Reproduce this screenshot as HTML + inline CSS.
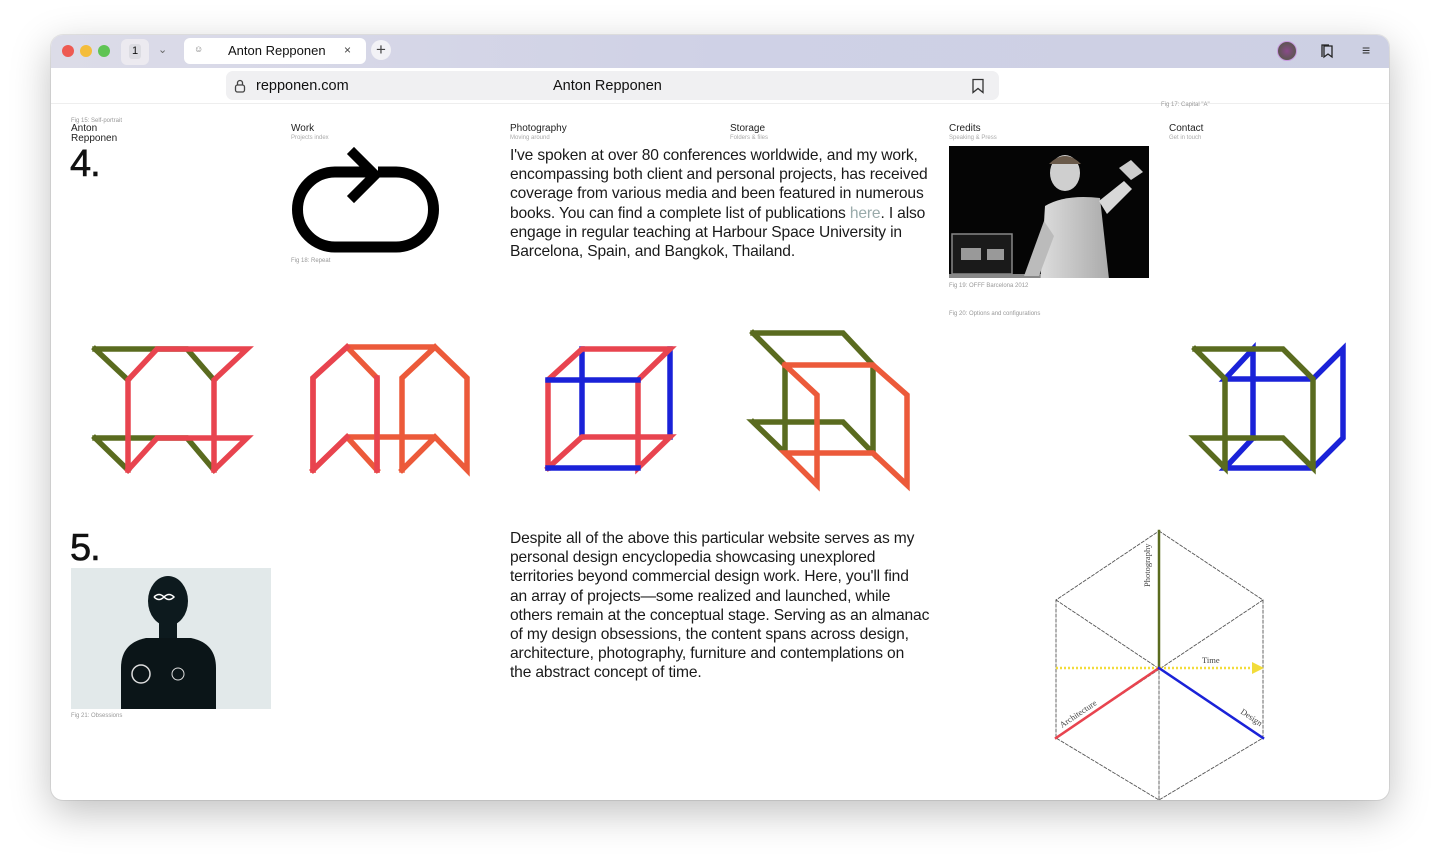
<!DOCTYPE html>
<html><head><meta charset="utf-8"><style>
*{margin:0;padding:0;box-sizing:border-box}
body{width:1440px;height:868px;background:#fff;font-family:"Liberation Sans",sans-serif;position:relative;overflow:hidden;color:#111}
.win{position:absolute;left:51px;top:35px;width:1338px;height:765px;border-radius:12px;background:#fff;box-shadow:0 12px 40px rgba(0,0,0,.25),0 0 0 1px rgba(0,0,0,.08);overflow:hidden}
.bar{position:absolute;left:0;top:0;width:100%;height:33px;background:linear-gradient(90deg,#dcdce8,#cfd1e6 50%,#cdd0e3)}
.dot{position:absolute;top:10px;width:12px;height:12px;border-radius:50%}
.a{position:absolute;white-space:nowrap}
.nav{font-size:10px;color:#222}
.sub{font-size:6px;color:#aaa}
.cap{font-size:6px;color:#999}
.big{font-size:15.6px;line-height:19.2px;color:#1a1a1a;letter-spacing:-0.15px}
.num{font-size:38px;line-height:40px;letter-spacing:-1px;-webkit-text-stroke:0.6px #111}
</style></head><body>
<div class="win">
 <div class="bar"></div>
 <div class="dot" style="left:11px;background:#ee5a52"></div>
 <div class="dot" style="left:29px;background:#f4bd3b"></div>
 <div class="dot" style="left:47px;background:#5fc454"></div>
 <div class="a" style="left:70px;top:4px;width:28px;height:26px;background:#eceaf0;border-radius:6px"></div>
 <div class="a" style="left:78px;top:9px;width:12px;height:15px;background:#dcdce2;border-radius:3px;font-size:11px;text-align:center;line-height:15px">1</div>
 <div class="a" style="left:107px;top:8px;font-size:11px;color:#666">&#8964;</div>
 <div class="a" style="left:133px;top:3px;width:182px;height:26px;background:#fff;border-radius:6px"></div>
 <div class="a" style="left:143px;top:9px;font-size:9px;color:#777">&#9786;</div>
 <div class="a" style="left:177px;top:8px;font-size:13px;color:#111">Anton Repponen</div>
 <div class="a" style="left:293px;top:8px;font-size:12px;color:#444">&#215;</div>
 <div class="a" style="left:320px;top:5px;width:20px;height:20px;border-radius:50%;background:#f2f2f6;font-size:17px;line-height:19px;text-align:center;color:#444">+</div>
 <div class="a" style="left:1226px;top:6px;width:20px;height:20px;border-radius:50%;background:radial-gradient(#8a4a8a,#4a5a3a);border:1.5px solid #c99be0"></div>
 <svg class="a" style="left:1268px;top:8px" width="16" height="16" viewBox="0 0 16 16" fill="none" stroke="#222" stroke-width="1.3"><path d="M5 3h8v11l-4-3-4 3z"/><path d="M3 5v9"/><path d="M3 5V2h7"/></svg>
 <div class="a" style="left:1311px;top:7px;font-size:14px;color:#333">&#8801;</div>
 <div class="a" style="left:0;top:33px;width:100%;height:36px;background:#fff;border-bottom:1px solid #eee"></div>
 <div class="a" style="left:175px;top:36px;width:773px;height:29px;background:#f0f0f2;border-radius:7px"></div>
 <svg class="a" style="left:183px;top:44px" width="12" height="14" viewBox="0 0 12 14" fill="none" stroke="#444" stroke-width="1.3"><rect x="1.5" y="6" width="9" height="7" rx="2"/><path d="M3.5 6V4a2.5 2.5 0 0 1 5 0v2"/></svg>
 <div class="a" style="left:205px;top:43px;font-size:14.5px;color:#111">repponen.com</div>
 <div class="a" style="left:502px;top:43px;font-size:14.5px;color:#111">Anton Repponen</div>
 <svg class="a" style="left:920px;top:43px" width="14" height="16" viewBox="0 0 14 16" fill="none" stroke="#333" stroke-width="1.3"><path d="M2 1.5h10v13l-5-4-5 4z"/></svg>
</div>

<div class="a cap" style="left:71px;top:118px">Fig 15: Self-portrait</div>
<div class="a nav" style="left:71px;top:124px;line-height:10px">Anton<br>Repponen</div>
<div class="a num" style="left:70px;top:144px">4.</div>
<div class="a nav" style="left:291px;top:123px">Work</div><div class="a sub" style="left:291px;top:135px">Projects index</div>
<div class="a nav" style="left:510px;top:123px">Photography</div><div class="a sub" style="left:510px;top:135px">Moving around</div>
<div class="a nav" style="left:730px;top:123px">Storage</div><div class="a sub" style="left:730px;top:135px">Folders &amp; files</div>
<div class="a nav" style="left:949px;top:123px">Credits</div><div class="a sub" style="left:949px;top:135px">Speaking &amp; Press</div>
<div class="a nav" style="left:1169px;top:123px">Contact</div><div class="a sub" style="left:1169px;top:135px">Get in touch</div>
<div class="a cap" style="left:1161px;top:102px">Fig 17: Capital "A"</div>

<div class="a big" style="left:510px;top:146px">I've spoken at over 80 conferences worldwide, and my work,<br>encompassing both client and personal projects, has received<br>coverage from various media and been featured in numerous<br>books. You can find a complete list of publications <span style="color:#9aa">here</span>. I also<br>engage in regular teaching at Harbour Space University in<br>Barcelona, Spain, and Bangkok, Thailand.</div>

<div class="a cap" style="left:291px;top:258px">Fig 18: Repeat</div>
<div class="a cap" style="left:949px;top:283px">Fig 19: OFFF Barcelona 2012</div>
<div class="a cap" style="left:949px;top:311px">Fig 20: Options and configurations</div>

<div class="a" style="left:949px;top:146px;width:200px;height:132px;background:#050505;overflow:hidden">
 <svg width="200" height="132"><defs><linearGradient id="g" x1="0" x2="1"><stop offset="0" stop-color="#ddd"/><stop offset="1" stop-color="#aaa"/></linearGradient></defs>
 <rect x="3" y="88" width="60" height="40" fill="#1a1a1a" stroke="#888" stroke-width="1.5"/><rect x="12" y="102" width="20" height="12" fill="#999"/><rect x="38" y="103" width="17" height="11" fill="#999"/>
 <rect x="0" y="128" width="110" height="4" fill="#888"/>
 <ellipse cx="116" cy="27" rx="15" ry="18" fill="#cfcfcf"/><path d="M100 18q16-16 32 0" fill="#6a5a4a"/>
 <path d="M96 60q20-12 55-8l10 90h-70z" fill="url(#g)"/>
 <path d="M150 55l25-20 8 8-25 25z" fill="#d8d8d8"/><path d="M170 22l12 12 12-8-12-12z" fill="#ccc"/>
 <path d="M95 75l-20 55h15l15-40z" fill="#bbb"/></svg>
</div>

<div class="a" style="left:71px;top:568px;width:200px;height:141px;background:#e2e9ea;overflow:hidden">
 <svg width="200" height="141"><ellipse cx="97" cy="33" rx="20" ry="25" fill="#0d1a1e"/><path d="M88 52h18v20h-18z" fill="#0d1a1e"/>
 <path d="M50 141V100q0-25 25-30h45q25 5 25 30v41z" fill="#0b1518"/>
 <path d="M83 29q5-5 10 0q5 5 10 0q-5-5-10 0q-5 5-10 0" stroke="#fff" stroke-width="1.5" fill="none"/>
 <circle cx="70" cy="106" r="9" fill="none" stroke="#ddd" stroke-width="1.5"/><circle cx="107" cy="106" r="6" fill="none" stroke="#ddd"/></svg>
</div>
<div class="a cap" style="left:71px;top:713px">Fig 21: Obsessions</div>
<div class="a num" style="left:70px;top:528px">5.</div>

<div class="a big" style="left:510px;top:529px">Despite all of the above this particular website serves as my<br>personal design encyclopedia showcasing unexplored<br>territories beyond commercial design work. Here, you'll find<br>an array of projects—some realized and launched, while<br>others remain at the conceptual stage. Serving as an almanac<br>of my design obsessions, the content spans across design,<br>architecture, photography, furniture and contemplations on<br>the abstract concept of time.</div>

<svg class="a" style="left:0;top:0" width="1440" height="868" fill="none" stroke-linecap="square" stroke-linejoin="miter">
 <path d="M378 172H396A37.5 37.5 0 0 1 396 247H335A37.5 37.5 0 0 1 335 172H370" stroke="#000" stroke-width="11" stroke-linecap="butt"/>
 <path d="M354 154L375 175L354 196" stroke="#000" stroke-width="10"/>
 <g stroke-width="5.5">
 <path d="M95 349H187L214 380M95 349L128 380M95 438H187L214 470M95 438L128 470" stroke="#5a6b1f"/>
 <path d="M128 470V380L157 349H247L214 380V470M128 470L157 438H247L214 470" stroke="#e8444f"/>
 <path d="M313 470V378L347 347H435L467 378V470L435 437H347L313 470M377 470V378L347 347M402 470V378L435 347M377 470L347 437M402 470L435 437" stroke="#ec5a3a"/>
 <path d="M313 470V378L347 347M313 470L347 437M377 470V378" stroke="#e8444f"/>
 <path d="M582 437V349M670 437V349" stroke="#1a22d8"/>
 <path d="M548 468V380L582 349H670L638 380V468L670 437H582L548 468" stroke="#e8444f"/>
 <path d="M548 380H638M548 468H638" stroke="#1a22d8"/>
 <path d="M753 333H843L873 365V453L843 422H753L785 453V365L753 333M753 422L785 453" stroke="#5a6b1f"/>
 <path d="M785 365H873L907 395V485L873 453H785L817 485V395L785 365" stroke="#ec5a3a"/>
 <path d="M1253 438V349L1225 379H1313L1343 349V438L1313 468H1225L1253 438" stroke="#1a22d8"/>
 <path d="M1195 349H1283L1313 379V468L1283 438H1195L1225 468V379L1195 349" stroke="#5a6b1f"/>
 </g>
 <g stroke="#555" stroke-width="0.9" stroke-dasharray="3 2">
  <path d="M1159 531L1263 600V738L1159 800L1056 738V600Z"/>
  <path d="M1056 600L1263 738M1263 600L1056 738M1159 531V800"/>
 </g>
 <path d="M1056 668H1252" stroke="#f2dc3a" stroke-width="2.5" stroke-dasharray="2 2" stroke-linecap="butt"/>
 <path d="M1252 662L1264 668L1252 674Z" fill="#f2dc3a"/>
 <path d="M1159 531V668" stroke="#5a6b1f" stroke-width="2.5"/>
 <path d="M1159 668L1056 738" stroke="#e8444f" stroke-width="2.5"/>
 <path d="M1159 668L1263 738" stroke="#1a22d8" stroke-width="2.5"/>
 <g font-family="Liberation Serif,serif" font-size="8.5" fill="#444" stroke="none">
  <text x="1202" y="663">Time</text>
  <text transform="translate(1150,587) rotate(-90)">Photography</text>
  <text transform="translate(1062,728) rotate(-34)">Architecture</text>
  <text transform="translate(1240,713) rotate(34)">Design</text>
 </g>
</svg>
</body></html>
